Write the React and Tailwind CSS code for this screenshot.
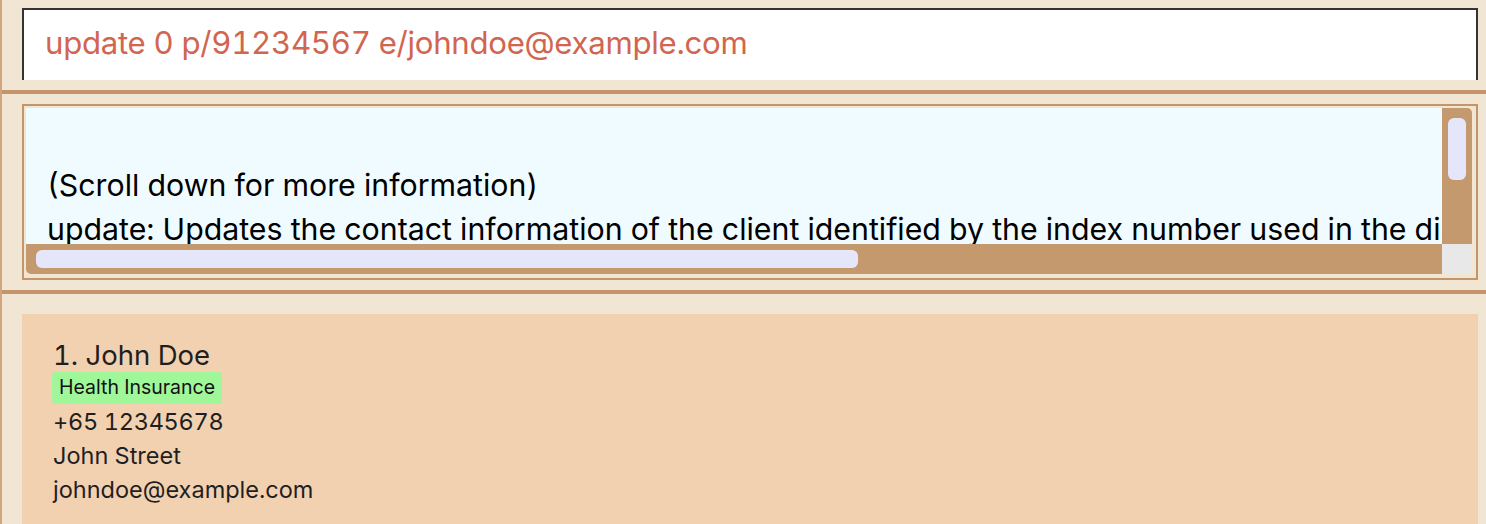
export default function App() {
  const font = { fontFamily: 'Inter, "Noto Sans", sans-serif' };
  return (
    <div className="w-[1486px] h-[524px] overflow-hidden bg-[#f0e6d3] border-l-2 border-[#d0a57f] flex flex-col tabular-nums" style={font}>
      <div className="pt-[8px] pl-[20px] pr-[8px]">
        <div className="h-[72px] bg-white border-t-2 border-x-2 border-[#333333] flex items-center pl-[21px] pb-[2px]">
          <span className="text-[#d2654f] text-[31.2px] tracking-[-0.3px] leading-none">update 0 p/91234567 e/johndoe@example.com</span>
        </div>
      </div>
      <div className="mt-[10px] h-[4px] bg-[#c4956a]" />
      <div className="pt-[10px] pl-[20px] pr-[8px]">
        <div className="h-[176px] border-2 border-[#c4956a] pt-[2px] pl-[2px] pr-[4px] pb-[4px]">
          <div className="grid grid-cols-[1fr_30px] grid-rows-[1fr_30px] h-full">
            <div className="bg-[#f0fbff] overflow-hidden pl-[21px] text-black text-[30.3px] leading-[44px] whitespace-nowrap">
              <div className="h-[55px]" />
              <div>(Scroll down for more information)</div>
              <div>update: Updates the contact information of the client identified by the index number used in the displayed person list.</div>
            </div>
            <div className="bg-[#c4996e] rounded-tr-[5px] pt-[10px] px-[6px]">
              <div className="h-[62px] bg-[#e6e6fa] rounded-[6px]" />
            </div>
            <div className="bg-[#c4996e] rounded-bl-[5px] pl-[10px] py-[6px]">
              <div className="w-[822px] h-full bg-[#e6e6fa] rounded-[6px]" />
            </div>
            <div className="bg-[#e8e8e8]" />
          </div>
        </div>
      </div>
      <div className="mt-[10px] h-[4px] bg-[#c4956a]" />
      <div className="pt-[20px] pl-[20px] pr-[8px] flex-1">
        <div className="h-full bg-[#f2d1b1] pl-[31px] pt-[24px] text-[#1f1f1f]">
          <div className="text-[27.5px] leading-[34px]">1. John Doe</div>
          <div className="flex -ml-[1px]">
            <span className="bg-[#a0f79a] rounded-[4px] px-[7px] h-[32px] flex items-center text-[19.5px] text-[#111]">Health Insurance</span>
          </div>
          <div className="text-[23.5px] leading-[34px] mt-[1px] tracking-[-0.3px]">+65 12345678</div>
          <div className="text-[23.5px] leading-[34px]">John Street</div>
          <div className="text-[23.5px] leading-[34px]">johndoe@example.com</div>
        </div>
      </div>
    </div>
  );
}
